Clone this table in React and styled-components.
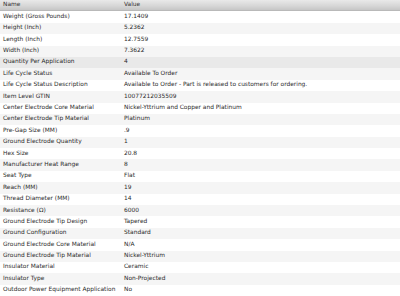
import React from 'react';
import styled, { createGlobalStyle } from 'styled-components';

const GlobalStyle = createGlobalStyle`
  html, body {
    margin: 0;
    padding: 0;
    background: #ffffff;
  }
  body {
    width: 400px;
    height: 296px;
    overflow: hidden;
  }
`;

const Table = styled.div`
  width: 400px;
  font-family: 'DejaVu Sans', Verdana, sans-serif;
  font-size: 5.9px;
  color: #2a2a2a;
`;

const Row = styled.div`
  display: grid;
  grid-template-columns: 121px 1fr;
  height: 11.4px;
  align-items: center;
  background: ${(p) => (p.$hover ? '#e9e9e9' : p.$even ? '#f5f5f5' : '#ffffff')};
`;

const HeaderRow = styled(Row)`
  background: linear-gradient(to bottom, #e9e9e9 0%, #d6d6d6 60%, #c6c6c6 100%);
  border-bottom: 1px solid #b9b9b9;
  box-sizing: border-box;
  color: #333333;
`;

const Cell = styled.div`
  padding-left: 3px;
  white-space: nowrap;
  overflow: hidden;
  line-height: 11.4px;
  margin-top: -1px;
`;

const rows = [
  ['Weight (Gross Pounds)', '17.1409'],
  ['Height (Inch)', '5.2362'],
  ['Length (Inch)', '12.7559'],
  ['Width (Inch)', '7.3622'],
  ['Quantity Per Application', '4'],
  ['Life Cycle Status', 'Available To Order'],
  ['Life Cycle Status Description', 'Available to Order - Part is released to customers for ordering.'],
  ['Item Level GTIN', '10077212035509'],
  ['Center Electrode Core Material', 'Nickel-Yttrium and Copper and Platinum'],
  ['Center Electrode Tip Material', 'Platinum'],
  ['Pre-Gap Size (MM)', '.9'],
  ['Ground Electrode Quantity', '1'],
  ['Hex Size', '20.8'],
  ['Manufacturer Heat Range', '8'],
  ['Seat Type', 'Flat'],
  ['Reach (MM)', '19'],
  ['Thread Diameter (MM)', '14'],
  ['Resistance (\u03A9)', '6000'],
  ['Ground Electrode Tip Design', 'Tapered'],
  ['Ground Configuration', 'Standard'],
  ['Ground Electrode Core Material', 'N/A'],
  ['Ground Electrode Tip Material', 'Nickel-Yttrium'],
  ['Insulator Material', 'Ceramic'],
  ['Insulator Type', 'Non-Projected'],
  ['Outdoor Power Equipment Application', 'No'],
];

export default function App() {
  return (
    <>
      <GlobalStyle />
      <Table>
        <HeaderRow>
          <Cell>Name</Cell>
          <Cell>Value</Cell>
        </HeaderRow>
        {rows.map(([name, value], i) => (
          <Row key={name} $even={i % 2 === 1} $hover={i === 4}>
            <Cell>{name}</Cell>
            <Cell>{value}</Cell>
          </Row>
        ))}
      </Table>
    </>
  );
}
